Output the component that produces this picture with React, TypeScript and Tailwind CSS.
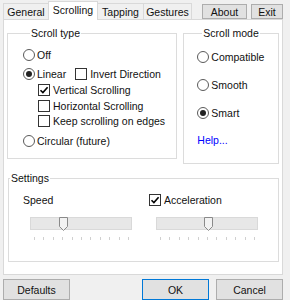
import React from "react";

function Radio({ checked }: { checked?: boolean }) {
  return (
    <span className="w-[12px] h-[12px] rounded-full border border-[#5a5a5a] bg-white flex items-center justify-center shrink-0">
      {checked && <span className="w-[6px] h-[6px] rounded-full bg-[#222]" />}
    </span>
  );
}

function Check({ checked }: { checked?: boolean }) {
  return (
    <span className="w-[12px] h-[12px] border border-[#333] bg-white flex items-center justify-center shrink-0">
      {checked && (
        <svg width="10" height="10" viewBox="0 0 10 10">
          <path d="M1.5 5.2 L3.9 7.6 L8.6 2.2" fill="none" stroke="#000" strokeWidth="1.6" />
        </svg>
      )}
    </span>
  );
}

function Slider({ pos }: { pos: number }) {
  const ticks = [0, 10, 20, 30, 40, 50, 60, 70, 80, 90, 100];
  return (
    <div className="w-[102px]">
      <div className="relative h-[13px] bg-[#e7e7e7] border border-[#d9d9d9]">
        <svg className="absolute top-[-1px]" style={{ left: pos }} width="9" height="14" viewBox="0 0 9 14">
          <path d="M0.5 0.5 H8.5 V9.5 L4.5 13.5 L0.5 9.5 Z" fill="#f2f2f2" stroke="#8a8a8a" />
        </svg>
      </div>
      <div className="relative h-[3px] mt-[7px] mx-[4px]">
        {ticks.map((t) => (
          <span key={t} className="absolute top-0 w-px h-[3px] bg-[#d0d0d0]" style={{ left: `${t}%` }} />
        ))}
      </div>
    </div>
  );
}

function Btn({ label, className }: { label: string; className?: string }) {
  return (
    <div className={"flex items-center justify-center bg-[#e1e1e1] border border-[#adadad] " + (className ?? "")}>
      {label}
    </div>
  );
}

export default function App() {
  return (
    <div className="w-[290px] h-[300px] bg-[#f0f0f0] flex flex-col text-[#111] text-[10.5px] leading-[12px] font-['Liberation_Sans',Arial,sans-serif]">
      {/* tab strip */}
      <div className="h-[19px] flex items-end pl-[3px]">
        <div className="w-[46px] h-[16px] flex items-center justify-center bg-[#f0f0f0] border border-b-0 border-[#d9d9d9]">General</div>
        <div className="relative z-10 -mb-px -ml-px w-[50px] h-[19px] flex items-center justify-center pb-[2px] bg-white border border-b-0 border-[#d9d9d9]">Scrolling</div>
        <div className="-ml-px w-[47px] h-[16px] flex items-center justify-center bg-[#f0f0f0] border border-b-0 border-[#d9d9d9]">Tapping</div>
        <div className="-ml-px w-[49px] h-[16px] flex items-center justify-center bg-[#f0f0f0] border border-b-0 border-[#d9d9d9]">Gestures</div>
        <div className="ml-auto self-start mt-[4px] flex gap-[4px] pr-[7px]">
          <Btn label="About" className="w-[45px] h-[15px]" />
          <Btn label="Exit" className="w-[32px] h-[15px]" />
        </div>
      </div>

      {/* tab panel */}
      <div className="ml-[3px] w-[280px] h-[256px] bg-white border border-[#d9d9d9] px-[3px] pt-[7px]">
        <div className="flex items-start gap-[6px]">
          <fieldset className="w-[171px] h-[132px] border border-[#dcdcdc] pl-[15px]">
            <legend className="ml-[7px] px-[1px] h-[12px]">Scroll type</legend>
            <div className="flex flex-col">
              <div className="mt-[8px] h-[16px] flex items-center gap-[2px]">
                <Radio /> <span>Off</span>
              </div>
              <div className="mt-[3px] h-[16px] flex items-center gap-[2px]">
                <Radio checked /> <span>Linear</span>
                <span className="ml-[7px]"><Check /></span>
                <span className="ml-[1px]">Invert Direction</span>
              </div>
              <div className="ml-[15px] h-[16px] flex items-center gap-[3px]">
                <Check checked /> <span>Vertical Scrolling</span>
              </div>
              <div className="ml-[15px] h-[16px] flex items-center gap-[3px]">
                <Check /> <span>Horizontal Scrolling</span>
              </div>
              <div className="ml-[15px] -mt-px h-[16px] flex items-center gap-[3px]">
                <Check /> <span>Keep scrolling on edges</span>
              </div>
              <div className="mt-[4px] h-[16px] flex items-center gap-[2px]">
                <Radio /> <span>Circular (future)</span>
              </div>
            </div>
          </fieldset>

          <fieldset className="w-[96px] h-[137px] border border-[#dcdcdc] pl-[13px]">
            <legend className="ml-[5px] px-[1px] h-[12px]">Scroll mode</legend>
            <div className="flex flex-col">
              <div className="mt-[10px] h-[16px] flex items-center gap-[2px]">
                <Radio /> <span>Compatible</span>
              </div>
              <div className="mt-[12px] h-[16px] flex items-center gap-[2px]">
                <Radio /> <span>Smooth</span>
              </div>
              <div className="mt-[12px] h-[16px] flex items-center gap-[2px]">
                <Radio checked /> <span>Smart</span>
              </div>
              <div className="mt-[11px] h-[16px] flex items-center text-[#0000ff]">Help...</div>
            </div>
          </fieldset>
        </div>

        <fieldset className="mt-[8px] ml-px w-[271px] h-[90px] border border-[#dcdcdc]">
          <legend className="ml-px px-[1px] h-[12px]">Settings</legend>
          <div className="flex">
            <div className="w-[140px] pl-[14px]">
              <div className="mt-[8px] h-[16px] flex items-center">Speed</div>
              <div className="mt-[9px] ml-[7px]">
                <Slider pos={28} />
              </div>
            </div>
            <div>
              <div className="mt-[8px] h-[16px] flex items-center gap-[3px]">
                <Check checked /> <span>Acceleration</span>
              </div>
              <div className="mt-[9px] ml-[7px]">
                <Slider pos={47} />
              </div>
            </div>
          </div>
        </fieldset>
      </div>

      {/* bottom buttons */}
      <div className="mt-[4px] flex pl-[3px]">
        <Btn label="Defaults" className="w-[67px] h-[21px]" />
        <Btn label="OK" className="ml-auto w-[67px] h-[21px] !border-[#0078d7]" />
        <Btn label="Cancel" className="ml-[7px] mr-[7px] w-[67px] h-[21px]" />
      </div>
    </div>
  );
}
